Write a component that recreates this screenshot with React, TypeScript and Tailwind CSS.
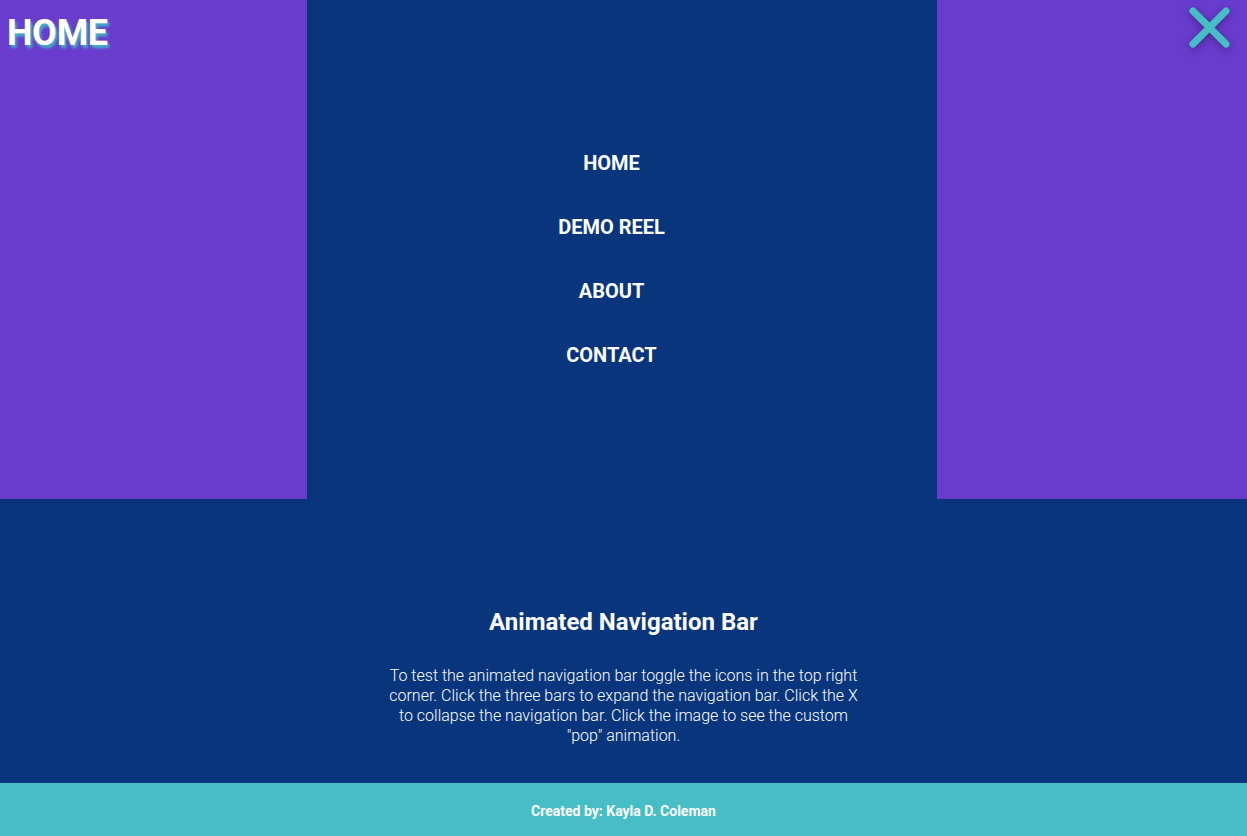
export default function App() {
  const links = ["HOME", "DEMO REEL", "ABOUT", "CONTACT"];
  return (
    <div className="flex min-h-[836px] w-full flex-col bg-[#08357c] font-['Roboto',sans-serif] text-white">
      <header className="flex h-[499px]">
        <div className="w-[307px] bg-[#693cce]">
          <h1 className="pl-[7px] pt-[12px] text-[36px] font-bold leading-[42px] tracking-[-0.3px] [text-shadow:2px_3px_3px_#3fb7c4]">
            HOME
          </h1>
        </div>
        <nav className="w-[630px] bg-[#08357c]">
          <ul className="flex flex-col items-center gap-[40px] pr-[21px] pt-[151px]">
            {links.map((l) => (
              <li key={l} className="text-[20px] font-bold leading-[24px]">
                {l}
              </li>
            ))}
          </ul>
        </nav>
        <div className="flex flex-1 justify-end bg-[#693cce]">
          <svg
            width="56"
            height="56"
            viewBox="0 0 56 56"
            className="mr-[7px] [filter:drop-shadow(0_2px_4px_rgba(40,20,90,0.6))]"
          >
            <path
              d="M9 11 L42 44 M42 11 L9 44"
              stroke="#47bec5"
              strokeWidth="7"
              strokeLinecap="round"
              fill="none"
            />
          </svg>
        </div>
      </header>
      <main className="flex flex-1 flex-col items-center pt-[107px]">
        <h2 className="text-[24px] font-bold leading-[32px]">Animated Navigation Bar</h2>
        <p className="mt-[28px] w-[480px] text-center text-[16px] font-light leading-[20px]">
          To test the animated navigation bar toggle the icons in the top right corner. Click the
          three bars to expand the navigation bar. Click the X to collapse the navigation bar. Click
          the image to see the custom "pop" animation.
        </p>
      </main>
      <footer className="flex h-[53px] items-center justify-center bg-[#47bec5] pt-[4px] text-[14px] font-bold">
        Created by: Kayla D. Coleman
      </footer>
    </div>
  );
}
